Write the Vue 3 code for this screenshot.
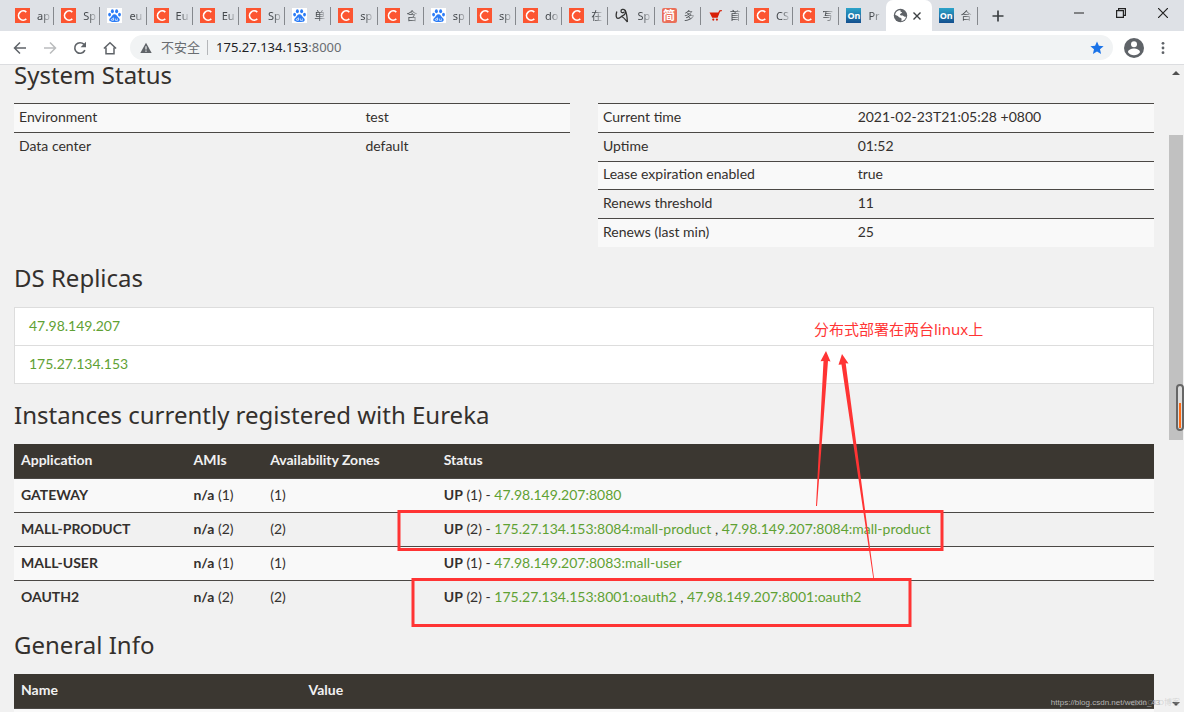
<script setup>
const tabs = [
  { icon: 'c', title: 'ap' },
  { icon: 'c', title: 'Sp' },
  { icon: 'paw', title: 'eu' },
  { icon: 'c', title: 'Eu' },
  { icon: 'c', title: 'Eu' },
  { icon: 'c', title: 'Sp' },
  { icon: 'paw', title: '单' },
  { icon: 'c', title: 'sp' },
  { icon: 'c', title: '含' },
  { icon: 'paw', title: 'sp' },
  { icon: 'c', title: 'sp' },
  { icon: 'c', title: 'do' },
  { icon: 'c', title: '在' },
  { icon: 'loop', title: 'Sp' },
  { icon: 'jian', title: '多' },
  { icon: 'cart', title: '首' },
  { icon: 'c', title: 'CS' },
  { icon: 'c', title: '写' },
  { icon: 'on', title: 'Pr' },
  { icon: 'globe', title: '', active: true },
  { icon: 'on', title: '合' },
]

const environment = [
  ['Environment', 'test'],
  ['Data center', 'default'],
]

const runtime = [
  ['Current time', '2021-02-23T21:05:28 +0800'],
  ['Uptime', '01:52'],
  ['Lease expiration enabled', 'true'],
  ['Renews threshold', '11'],
  ['Renews (last min)', '25'],
]

const replicas = ['47.98.149.207', '175.27.134.153']

const instances = [
  { name: 'GATEWAY', count: 1, nodes: ['47.98.149.207:8080'] },
  { name: 'MALL-PRODUCT', count: 2, nodes: ['175.27.134.153:8084:mall-product', '47.98.149.207:8084:mall-product'] },
  { name: 'MALL-USER', count: 1, nodes: ['47.98.149.207:8083:mall-user'] },
  { name: 'OAUTH2', count: 2, nodes: ['175.27.134.153:8001:oauth2', '47.98.149.207:8001:oauth2'] },
]
</script>

<template>
  <div class="window">
    <header class="tabstrip">
      <nav class="tabs" aria-label="Tabs">
        <div
          v-for="(tab, i) in tabs"
          :key="i"
          class="tab"
          :class="{ active: tab.active, plain: tabs[i + 1] && tabs[i + 1].active }"
        >
          <span v-if="tab.icon === 'c'" class="fav fav-c">
            <svg viewBox="0 0 15 15"><path d="M11.300 4.200A4.600 4.600 0 1 0 11.300 10.900" fill="none" stroke="#fff" stroke-width="1.700" /></svg>
          </span>
          <span v-else-if="tab.icon === 'paw'" class="fav fav-paw">
            <svg viewBox="0 0 15 15" fill="#2b7cf6">
              <ellipse cx="2.600" cy="6.600" rx="1.400" ry="1.900" />
              <ellipse cx="5.400" cy="3.200" rx="1.500" ry="2" />
              <ellipse cx="9.600" cy="3.200" rx="1.500" ry="2" />
              <ellipse cx="12.500" cy="6.600" rx="1.400" ry="1.900" />
              <path d="M7.500 6.200c2 0 2.300 1.900 3.600 3 1.600 1.300 1.900 2.400 1.400 3.600-.7 1.500-2.900 1.100-5 1.100s-4.300.4-5-1.100c-.5-1.200-.2-2.300 1.400-3.600 1.300-1.100 1.600-3 3.600-3z" />
              <path d="M6.400 9.500v3M6.400 11c-1.600-.8-2.400.2-2 1 .3.600 1.300.6 2 0M8.300 10.500v1.500q0 .6 1 .6h1v-2.100" fill="none" stroke="#fff" stroke-width=".7" />
            </svg>
          </span>
          <span v-else-if="tab.icon === 'loop'" class="fav">
            <svg viewBox="0 0 15 15" fill="none" stroke="#333" stroke-width="1.300">
              <path d="M1.800 3.500C.8 7 .8 10.200 2.800 10.400 5 10.400 6 8.200 7.800 7.600 10 6.900 11.300 4.500 10 2.300 8.700.6 5.800 1.200 6 3.200c.2 1.800 2.400 2 3.200.6" />
              <path d="M10 2c2 3.500 2.200 7.500 2.400 12M6.500 8.500c2 .6 3.800 3 5.900 5.500" />
            </svg>
          </span>
          <span v-else-if="tab.icon === 'jian'" class="fav fav-jian">简</span>
          <span v-else-if="tab.icon === 'cart'" class="fav">
            <svg viewBox="0 0 15 15" fill="#d81e06">
              <path d="M1.500 4.500h8.700l1.300-2.300L14 2l-.4 1.300-1.500.3-2.500 6.200H4.200z" />
              <circle cx="5.300" cy="11.600" r="1.100" /><circle cx="8.900" cy="11.600" r="1.100" />
            </svg>
          </span>
          <span v-else-if="tab.icon === 'on'" class="fav fav-on">On</span>
          <span v-else class="fav">
            <svg viewBox="0 0 15 15">
              <circle cx="7.500" cy="7.500" r="6.700" fill="#5f6368" />
              <path d="M7.500 2.300c-.3 1.500.5 1.700 1.500 1.700.2 1.500-1.700 1.300-2 2.500-.1 1 1.800 1 2.800.9 1 .4 1 1.500 3.300 1.400-.5 2.200-2.300 4-4.600 4.400-.2-1.700.5-2-.3-2.900-1-.8-2.200-.4-2.700-1.500C5 7.500 3.500 7.600 2.200 7 2.300 4.300 4.600 2.300 7.500 2.300z" fill="#fff" />
            </svg>
          </span>
          <button v-if="tab.active" class="tab-close" aria-label="Close tab">
            <svg viewBox="0 0 8 8"><path d="M.5.5l7 7M7.500.5l-7 7" stroke="#3c4043" stroke-width="1.400" /></svg>
          </button>
          <span v-else class="tab-title">{{ tab.title }}</span>
        </div>
      </nav>
      <button class="new-tab" aria-label="New tab">
        <svg viewBox="0 0 12 12"><path d="M6 .5v11M.5 6h11" stroke="#3c4043" stroke-width="1.700" /></svg>
      </button>
      <div class="controls">
        <button aria-label="Minimize"><svg viewBox="0 0 10 10"><path d="M0 5h10" stroke="#222" /></svg></button>
        <button aria-label="Restore"><svg viewBox="0 0 10 10" fill="none" stroke="#222" stroke-width="1.200"><path d="M.6 2.600h6.800v6.800H.6zM2.600 2.600v-2h6.800v6.800h-2" /></svg></button>
        <button aria-label="Close"><svg viewBox="0 0 10 10"><path d="M0 0l10 10M10 0L0 10" stroke="#222" stroke-width="1.200" /></svg></button>
      </div>
    </header>

    <div class="toolbar">
      <div class="nav">
        <button aria-label="Back"><svg viewBox="0 0 14 14" fill="none" stroke="#5f6368" stroke-width="1.500"><path d="M13 7H1.500M7 1.500L1.500 7 7 12.500" /></svg></button>
        <button aria-label="Forward"><svg viewBox="0 0 14 14" fill="none" stroke="#babcbe" stroke-width="1.500"><path d="M1 7h11.500M7 1.500L12.500 7 7 12.500" /></svg></button>
        <button aria-label="Reload"><svg viewBox="0 0 14 14"><path d="M11.900 9.200A5.300 5.300 0 1 1 11 3.400" fill="none" stroke="#5f6368" stroke-width="1.600" /><path d="M13 .8v5.400H7.600z" fill="#5f6368" /></svg></button>
        <button aria-label="Home"><svg viewBox="0 0 14 14" fill="none" stroke="#5f6368" stroke-width="1.500"><path d="M.9 7.500L7 1.800l6.100 5.700M3 6.500v6.200h8V6.500" /></svg></button>
      </div>
      <div class="omnibox">
        <svg class="warn" viewBox="0 0 12 12"><path d="M6 .8L11.700 11H.3z" fill="#5f6368" /><path d="M6 4.200v3.200M6 8.400v1.300" stroke="#f1f3f4" stroke-width="1.200" /></svg>
        <span class="insecure">不安全</span>
        <span class="bar"></span>
        <span class="url">175.27.134.153<span class="port">:8000</span></span>
        <button class="star" aria-label="Bookmark"><svg viewBox="0 0 14 14"><path d="M7 .5l1.900 4.300 4.700.4L10 8.300l1.100 4.700L7 10.500 2.900 13 4 8.300.4 5.200l4.700-.4z" fill="#1a73e8" /></svg></button>
      </div>
      <button class="profile" aria-label="Profile">
        <svg viewBox="0 0 20 20"><circle cx="10" cy="10" r="10" fill="#5f6368" /><circle cx="10" cy="6.300" r="3" fill="#fff" /><path d="M4 14.300c0-2.400 3.500-3.700 6-3.700s6 1.300 6 3.700c-1.300 2-3.600 3-6 3s-4.700-1-6-3z" fill="#fff" /></svg>
      </button>
      <button class="more" aria-label="Menu">
        <svg viewBox="0 0 4 14" fill="#5f6368"><circle cx="2" cy="2.300" r="1.400" /><circle cx="2" cy="7" r="1.400" /><circle cx="2" cy="11.700" r="1.400" /></svg>
      </button>
    </div>

    <div class="viewport">
      <main class="page">
        <h1>System Status</h1>
        <div class="status">
          <div>
            <table class="info env">
              <tbody>
                <tr v-for="row in environment" :key="row[0]"><td>{{ row[0] }}</td><td>{{ row[1] }}</td></tr>
              </tbody>
            </table>
          </div>
          <table class="info run">
            <tbody>
              <tr v-for="row in runtime" :key="row[0]"><td>{{ row[0] }}</td><td>{{ row[1] }}</td></tr>
            </tbody>
          </table>
        </div>

        <h1>DS Replicas</h1>
        <ul class="replicas">
          <li v-for="host in replicas" :key="host"><a href="#">{{ host }}</a></li>
        </ul>

        <h1>Instances currently registered with Eureka</h1>
        <table class="grid apps">
          <thead>
            <tr><th>Application</th><th>AMIs</th><th>Availability Zones</th><th>Status</th></tr>
          </thead>
          <tbody>
            <tr v-for="app in instances" :key="app.name">
              <td><b>{{ app.name }}</b></td>
              <td><b>n/a</b> ({{ app.count }})</td>
              <td>({{ app.count }})</td>
              <td>
                <b>UP</b> ({{ app.count }}) -
                <template v-for="(node, i) in app.nodes" :key="node"><template v-if="i"> , </template><a href="#">{{ node }}</a></template>
              </td>
            </tr>
          </tbody>
        </table>

        <h1>General Info</h1>
        <table class="grid general">
          <thead>
            <tr><th>Name</th><th>Value</th></tr>
          </thead>
          <tbody>
            <tr><td></td><td></td></tr>
          </tbody>
        </table>
      </main>

      <div class="scrollbar">
        <svg class="arrow" viewBox="0 0 8 4"><path d="M0 4l4-4 4 4z" fill="#505050" /></svg>
        <div class="thumb"></div>
        <svg class="arrow down" viewBox="0 0 8 4"><path d="M0 0l4 4 4-4z" fill="#505050" /></svg>
      </div>

      <div class="meter"><span></span></div>
      <svg class="marks" width="1184" height="647" viewBox="0 65 1184 647">
        <g fill="none" stroke="#ff3434" stroke-width="3">
          <rect x="399" y="511.500" width="543" height="38" />
          <rect x="413" y="579.500" width="497" height="46" />
        </g>
        <g fill="#ff3434">
          <path d="M826 351l4.500 10.500-2.500-.5L817 506h-1L823.500 361l-3 .3z" />
          <path d="M842 354l6.500 9.500-2.800-.3L874 578h-.8L841.500 364.500l-3 .3z" />
        </g>
      </svg>
      <div class="note">分布式部署在两台linux上</div>
      <div class="watermark">https://blog.csdn.net/weixin_43<span>@51CTO博客</span></div>
    </div>
  </div>
</template>

<style>
body {
  margin: 0;
  overflow: hidden;
}
</style>

<style scoped>
.window {
  display: flex;
  flex-direction: column;
  height: 100vh;
  font-family: "Noto Sans", "Noto Sans CJK SC", sans-serif;
  color: #34302d;
  background: #f1f1f1;
}
button {
  display: flex;
  align-items: center;
  justify-content: center;
  padding: 0;
  border: 0;
  background: none;
}
svg {
  display: block;
}
.tabstrip {
  display: flex;
  height: 31px;
  background: #dee1e6;
}
.tabs {
  display: flex;
  flex: 1;
  min-width: 0;
  padding-left: 8px;
}
.tab {
  position: relative;
  display: flex;
  flex: 1;
  align-items: center;
  gap: 7px;
  min-width: 0;
  padding: 0 0 0 7px;
  box-sizing: border-box;
}
.tab::after {
  content: "";
  position: absolute;
  right: 0;
  top: 7px;
  width: 1px;
  height: 18px;
  background: #85888d;
}
.tab.active::after,
.tab.plain::after {
  display: none;
}
.tab.active {
  gap: 5px;
  background: #fff;
  border-radius: 7px 7px 0 0;
}
.fav {
  flex: none;
  width: 15px;
  height: 15px;
  overflow: hidden;
}
.fav-c {
  background: #fc5531;
}
.fav-paw {
  background: #fff;
}
.fav-jian {
  border-radius: 2px;
  background: #ea6f5a;
  color: #fff;
  font-size: 12px;
  font-weight: 700;
  line-height: 15px;
  text-align: center;
}
.fav-on {
  background: linear-gradient(#2ba3c9, #14508f);
  color: #fff;
  font-size: 9px;
  font-weight: 700;
  line-height: 15px;
  text-align: center;
}
.tab-close svg {
  width: 8px;
  height: 8px;
}
.tab-title {
  white-space: nowrap;
  font-size: 11px;
  line-height: 16px;
  color: #45494d;
  mask-image: linear-gradient(to right, #000 40%, #0003);
}
.new-tab {
  width: 40px;
}
.new-tab svg {
  width: 12px;
  height: 12px;
}
.controls {
  display: flex;
  padding-bottom: 5px;
}
.controls button {
  width: 42px;
}
.controls button:first-child {
  margin-left: 40px;
}
.controls svg {
  width: 10px;
  height: 10px;
}
.toolbar {
  display: flex;
  align-items: center;
  height: 33px;
  padding: 0 13px;
  border-bottom: 1px solid #dcdde0;
  background: #fff;
}
.nav {
  display: flex;
  gap: 16px;
  margin-right: 13px;
}
.nav svg,
.star svg {
  width: 14px;
  height: 14px;
}
.omnibox {
  display: flex;
  flex: 1;
  align-items: center;
  height: 25px;
  padding: 0 9px 0 10px;
  border-radius: 13px;
  background: #f1f3f4;
  font-size: 13px;
  line-height: 25px;
  color: #202124;
}
.warn {
  width: 12px;
  height: 12px;
  margin-right: 9px;
}
.insecure,
.port {
  color: #696d71;
}
.bar {
  width: 1px;
  height: 15px;
  margin: 0 8px 0 7px;
  background: #b4b6b9;
}
.url {
  flex: 1;
}
.profile {
  margin: 0 17px 0 11px;
}
.profile svg {
  width: 20px;
  height: 20px;
}
.more svg {
  width: 4px;
  height: 14px;
}
.more {
  margin-right: 6px;
}
.viewport {
  position: relative;
  display: flex;
  flex: 1;
  min-height: 0;
  overflow: hidden;
}
.page {
  flex: 1;
  padding: 0 15px 0 14px;
  font-family: Lato, "Noto Sans", sans-serif;
  font-size: 14px;
}
h1 {
  margin: 21px 0 19px;
  font-family: "Noto Sans", sans-serif;
  font-size: 24px;
  font-weight: 400;
  line-height: 20px;
}
h1:first-child {
  margin: 0 0 18px;
}
table {
  width: 100%;
  border-collapse: collapse;
  table-layout: fixed;
}
.status {
  display: grid;
  grid-template-columns: 1fr 1fr;
  gap: 28px;
}
.info td {
  height: 26px;
  padding: 0 5px 2px;
  border-top: 1px solid #4b4845;
  line-height: 20px;
}
.info tr:nth-child(odd) {
  background: #f9f9f9;
}
.run {
  height: 144px;
}
.run td {
  height: 25px;
}
.env td:first-child {
  width: 60.5%;
}
.run td:first-child {
  width: 44%;
}
.replicas {
  margin: 0;
  padding: 0;
  border: 1px solid #ddd;
  background: #fff;
  list-style: none;
}
.replicas li {
  padding: 0 14px 2px;
  line-height: 35px;
}
.replicas li + li {
  border-top: 1px solid #ddd;
}
a {
  color: #5fa134;
  text-decoration: none;
}
.grid th {
  height: 31px;
  padding: 0 7px 3px;
  background: #3b3731;
  color: #f1f1f1;
  font-weight: 700;
  text-align: left;
}
.grid td {
  height: 30px;
  padding: 0 7px 3px;
  border-top: 1px solid #4b4845;
}
.grid tbody tr:nth-child(odd) {
  background: #f9f9f9;
}
b {
  font-weight: 700;
}
.apps th:nth-child(1) {
  width: 13.9%;
}
.apps th:nth-child(2) {
  width: 5.5%;
}
.apps th:nth-child(3) {
  width: 14%;
}
.general th:first-child {
  width: 24%;
}
.scrollbar {
  display: flex;
  flex-direction: column;
  align-items: center;
  width: 14px;
  padding: 6px 1px 6px 0;
}
.arrow {
  width: 8px;
  height: 4px;
}
.thumb {
  width: 100%;
  height: 305px;
  margin-top: 60px;
  background: #c1c1c1;
}
.down {
  margin-top: auto;
}
.meter {
  position: absolute;
  right: 0;
  top: 319px;
  display: flex;
  align-items: flex-end;
  width: 8px;
  height: 47px;
  padding: 1px;
  box-sizing: border-box;
  border: 2px solid #666;
  border-radius: 4px;
  background: #ddd;
}
.meter span {
  width: 100%;
  height: 25px;
  background: #ff6a13;
}
.marks {
  position: absolute;
  left: 0;
  top: 0;
}
.note {
  position: absolute;
  left: 814px;
  top: 253px;
  font-size: 15px;
  line-height: 22px;
  color: #ff3434;
}
.watermark {
  position: absolute;
  right: 4px;
  bottom: 3px;
  font-family: "Liberation Sans", "Noto Sans CJK SC", sans-serif;
  font-size: 8px;
  line-height: 12px;
  color: #b5b5b5;
}
.watermark span {
  margin-left: -30px;
  color: #aaaaaa66;
}
</style>
